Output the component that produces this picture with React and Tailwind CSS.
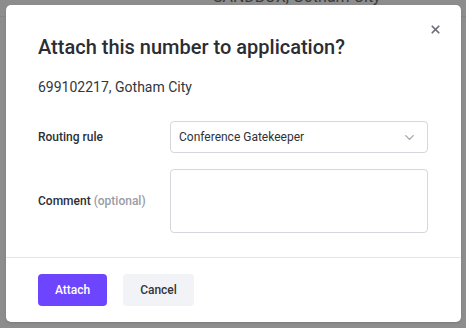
import { X, ChevronDown } from "lucide-react";

function App() {
  return (
    <div className="relative w-[466px] h-[328px] overflow-hidden bg-[#8d8d8d] font-['Roboto',sans-serif]">
      {/* page behind the overlay */}
      <div className="h-[30px] border-b border-[#858585] flex items-start -mt-[13px]">
        <ChevronDown className="ml-[77px] w-[14px] h-[14px] mt-[2px] text-[#3c3c3c]" strokeWidth={2.5} />
        <span className="ml-[122px] text-[16px] leading-[20px] text-[#3a3a3a]">
          SANDBOX, Gotham City
        </span>
      </div>

      {/* modal */}
      <div className="absolute left-[6px] top-[5px] w-[455px] bg-white rounded-[5px] shadow-sm">
        <button className="absolute right-[19px] top-[18px] text-[#6b6e76]">
          <X className="w-[13px] h-[13px]" strokeWidth={3.2} />
        </button>

        <div className="px-[32px] pt-[28px] pb-[24px]">
          <h2 className="text-[20px] leading-[28px] font-medium text-[#2b2d33]">
            Attach this number to application?
          </h2>
          <p className="mt-[16px] text-[14px] leading-[20px] text-[#34363c]">
            699102217, Gotham City
          </p>

          <div className="mt-[24px] flex flex-col gap-[16px]">
            <div className="flex items-center">
              <label className="w-[132px] text-[12px] font-medium text-[#2d2f35]">
                Routing rule
              </label>
              <div className="w-[258px] h-[32px] border border-[#d5d7dd] rounded-[4px] flex items-center justify-between pl-[8px] pr-[10px]">
                <span className="text-[12px] text-[#303238]">Conference Gatekeeper</span>
                <ChevronDown className="w-[15px] h-[15px] text-[#a4a7ae]" strokeWidth={2.2} />
              </div>
            </div>
            <div className="flex items-center">
              <label className="w-[132px] text-[12px] font-medium text-[#2d2f35]">
                Comment <span className="text-[#9a9ca4]">(optional)</span>
              </label>
              <textarea className="w-[258px] h-[64px] border border-[#d5d7dd] rounded-[4px] resize-none" />
            </div>
          </div>
        </div>

        <div className="border-t border-[#e4e5ea] px-[32px] pt-[16px] pb-[16px] flex gap-[16px]">
          <button className="w-[69px] h-[32px] rounded-[4px] bg-[#6d45fe] text-white text-[12px] font-medium">
            Attach
          </button>
          <button className="w-[71px] h-[32px] rounded-[4px] bg-[#f2f3f7] text-[#33353b] text-[12px] font-medium">
            Cancel
          </button>
        </div>
      </div>
    </div>
  );
}

export default App;
